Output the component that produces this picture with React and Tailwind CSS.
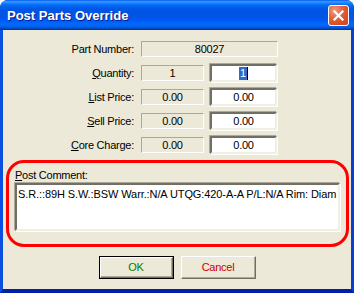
import React from 'react';

const sunken = 'border-2 border-t-[#716F64] border-l-[#716F64] border-b-[#F1EFE2] border-r-[#F1EFE2] shadow-[-1px_-1px_0_#ACA899,1px_1px_0_#FFFFFF]';
const flat = 'border border-t-[#ACA899] border-l-[#ACA899] border-b-white border-r-white';

function Label({ u, rest }) {
    return (
        <div className="w-[131px] text-right">
            {u && <span className="underline underline-offset-[1px]">{u}</span>}
            {rest}
        </div>
    );
}

function ReadBox({ value, wide }) {
    return (
        <div className={`${wide ? 'w-[137px]' : 'w-[63px]'} h-[16px] ml-[7px] ${flat} flex items-center justify-center leading-none`}>
            {value}
        </div>
    );
}

function EditBox({ children }) {
    return (
        <div className={`w-[67px] h-[18px] ml-[6px] mr-px bg-white ${sunken} flex items-center justify-center leading-none`}>
            {children}
        </div>
    );
}

export default function App() {
    const rows = [
        { u: 'L', rest: 'ist Price:', value: '0.00' },
        { u: 'S', rest: 'ell Price:', value: '0.00' },
        { u: 'C', rest: 'ore Charge:', value: '0.00' },
    ];

    return (
        <div className="w-[354px] h-[293px] bg-white font-['Liberation_Sans',Arial,sans-serif] text-[11px] tracking-[-0.25px] text-black">
            <div className="h-full flex flex-col rounded-t-[8px] overflow-hidden bg-[#0842d9]">
                {/* Title bar */}
                <div className="h-[30px] shrink-0 flex items-center justify-between pl-[7px] pr-[5px] bg-[linear-gradient(180deg,#0058ee_0%,#3593ff_5%,#288eff_8%,#127dff_12%,#036ffc_16%,#0262ee_22%,#0057e5_30%,#0054e3_40%,#0055eb_60%,#005bf5_70%,#026afe_80%,#0062ef_88%,#0052d6_93%,#0040ab_97%,#003092_100%)]">
                    <span className="text-white font-bold text-[13px] tracking-normal pt-[2px] [text-shadow:1px_1px_0_#0a1e8a]">
                        Post Parts Override
                    </span>
                    <div className="w-[21px] h-[21px] rounded-[3px] border border-white bg-[radial-gradient(circle_at_30%_25%,#f09a80_0%,#e35d35_45%,#c8411c_100%)] flex items-center justify-center">
                        <svg width="13" height="13" viewBox="0 0 13 13">
                            <path d="M2.5 2.5 L10.5 10.5 M10.5 2.5 L2.5 10.5" stroke="white" strokeWidth="2.2" strokeLinecap="square" />
                        </svg>
                    </div>
                </div>

                {/* Dialog body */}
                <div className="flex-1 flex flex-col bg-[#ECE9D8] border-l-[3px] border-r-[3px] border-b-[4px] border-l-[#0a4fe0] border-r-[#0a3fd6] border-b-[#0020a8] pt-[9px]">
                    <div className="flex flex-col gap-[4px]">
                        <div className="h-[20px] flex items-center">
                            <Label rest="Part Number:" />
                            <ReadBox value="80027" wide />
                        </div>
                        <div className="h-[20px] flex items-center">
                            <Label u="Q" rest="uantity:" />
                            <ReadBox value="1" />
                            <EditBox>
                                <span className="bg-[#316AC5] text-white px-[1px] leading-[13px]">1</span>
                                <span className="w-px h-[13px] bg-black" />
                            </EditBox>
                        </div>
                        {rows.map((r) => (
                            <div key={r.u} className="h-[20px] flex items-center">
                                <Label u={r.u} rest={r.rest} />
                                <ReadBox value={r.value} />
                                <EditBox>{r.value}</EditBox>
                            </div>
                        ))}
                    </div>

                    {/* Post comment (highlighted) */}
                    <div className="mt-[5px] ml-[3px] w-[343px] h-[87px] border-[3px] border-[#ff0000] rounded-[18px] pt-[6px] pl-[5px]">
                        <div className="pl-px leading-[13px]">
                            <span className="underline underline-offset-[1px]">P</span>ost Comment:
                        </div>
                        <div className={`w-[325px] h-[48px] ml-px mt-px bg-white ${sunken} overflow-hidden whitespace-nowrap pl-px pt-[3px] leading-[13px] tracking-[-0.1px]`}>
                            S.R.::89H S.W.:BSW Warr.:N/A UTQG:420-A-A P/L:N/A Rim: Diam
                        </div>
                    </div>

                    {/* Buttons */}
                    <div className="mt-[9px] flex justify-center gap-[7px]">
                        <button className="w-[75px] h-[23px] border border-black bg-[#ECE9D8] p-0">
                            <div className="h-full border border-t-white border-l-white border-b-[#716F64] border-r-[#716F64] shadow-[inset_-1px_-1px_0_#ACA899] flex items-center justify-center text-[#008000]">
                                OK
                            </div>
                        </button>
                        <button className="w-[75px] h-[23px] border border-t-white border-l-white border-b-[#716F64] border-r-[#716F64] bg-[#ECE9D8] shadow-[inset_-1px_-1px_0_#ACA899] flex items-center justify-center text-[#cc0000]">
                            Cancel
                        </button>
                    </div>
                </div>
            </div>
        </div>
    );
}
